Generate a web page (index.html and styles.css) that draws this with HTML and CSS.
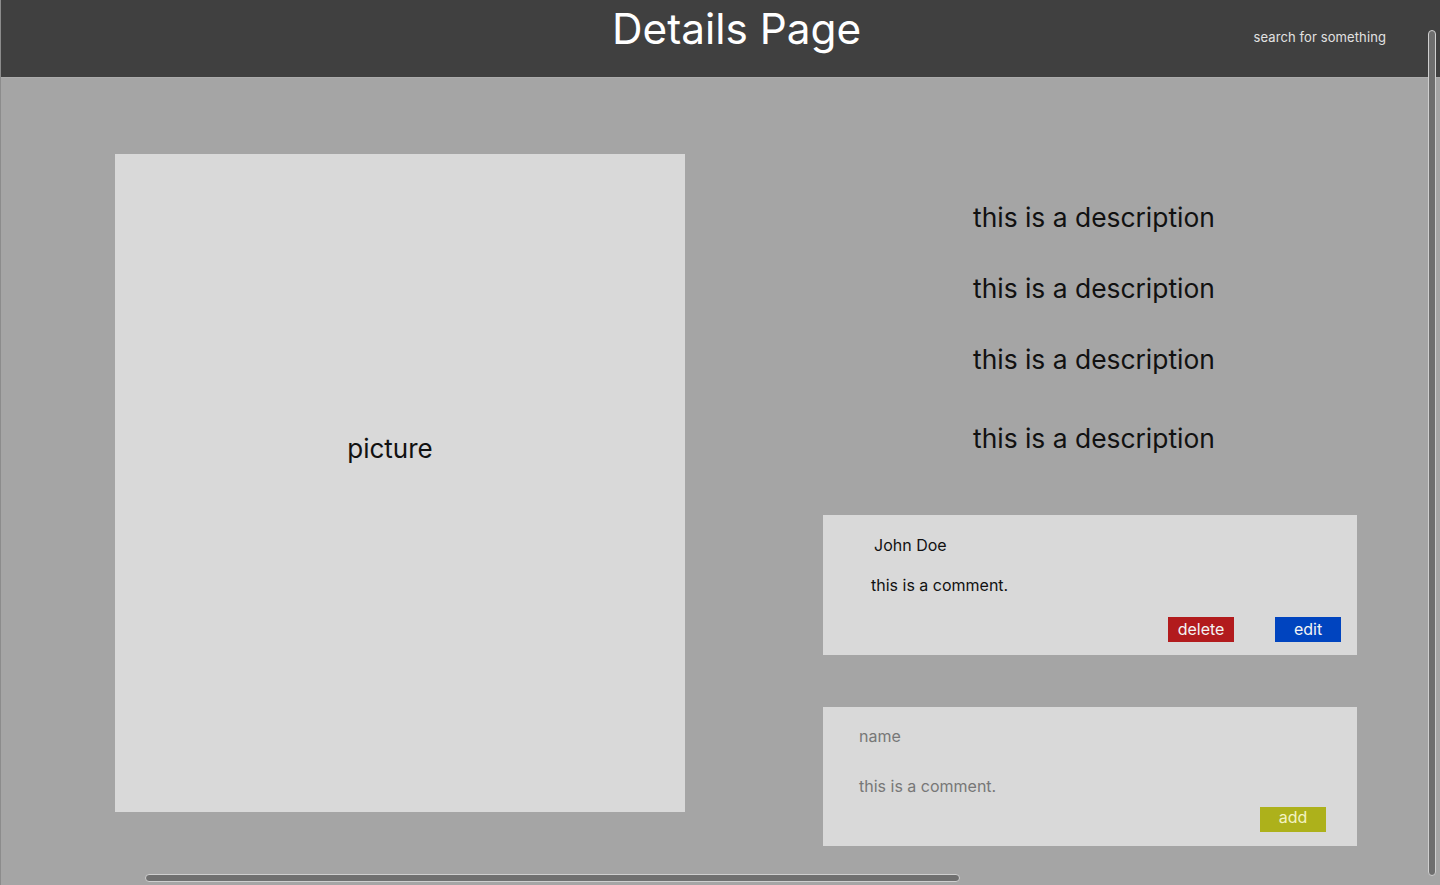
FILE: index.html
```html
<!DOCTYPE html>
<html>
<head>
<meta charset="utf-8">
<link rel="stylesheet" href="styles.css">
</head>
<body>
<header class="topbar">
  <h1 class="title">Details Page</h1>
  <div class="search">search for something</div>
</header>
<main class="content">
  <section class="picture">picture</section>
  <section class="side">
    <div class="descriptions">
      <p class="desc">this is a description</p>
      <p class="desc">this is a description</p>
      <p class="desc">this is a description</p>
      <p class="desc last">this is a description</p>
    </div>
    <div class="card comment">
      <div class="author">John Doe</div>
      <div class="comment-text">this is a comment.</div>
      <div class="actions">
        <button class="btn delete">delete</button>
        <button class="btn edit">edit</button>
      </div>
    </div>
    <div class="card form">
      <div class="field name">name</div>
      <div class="field body">this is a comment.</div>
      <div class="form-actions">
        <button class="btn add">add</button>
      </div>
    </div>
  </section>
</main>
<div class="vscroll"></div>
<div class="hscroll"></div>
</body>
</html>
```
FILE: styles.css
```css
* { box-sizing: border-box; }
html, body {
  margin: 0;
  padding: 0;
  width: 1440px;
  height: 885px;
  overflow: hidden;
}
body {
  background: #a5a5a5;
  font-family: Inter, "Noto Sans", sans-serif;
  color: #111;
  position: relative;
  border-left: 1px solid #8c8c8c;
}
.topbar {
  height: 78px;
  background: #404040;
  border-bottom: 1px solid #adadad;
  display: flex;
  align-items: flex-start;
}
.title {
  margin: 3px 0 0 611px;
  font-size: 42.3px;
  font-weight: 400;
  line-height: 51px;
  color: #ffffff;
}
.search {
  margin: 29px 54px 0 auto;
  font-size: 13px;
  line-height: 16px;
  letter-spacing: 0.1px;
  color: #e2e2e2;
}
.content {
  display: flex;
  align-items: flex-start;
  padding: 76px 0 0 114px;
}
.picture {
  width: 570px;
  height: 658px;
  background: #d9d9d9;
  display: flex;
  align-items: center;
  justify-content: center;
  font-size: 26px;
  color: #111;
  padding: 0 20px 70px 0;
}
.side {
  margin-left: 138px;
  width: 534px;
  display: flex;
  flex-direction: column;
}
.descriptions {
  padding: 47px 0 0 150px;
}
.desc {
  margin: 0 0 39px 0;
  font-size: 26.4px;
  line-height: 32px;
  color: #111;
}
.desc:nth-child(3) { margin-bottom: 47px; }
.desc.last { margin-bottom: 61px; }
.card {
  background: #d9d9d9;
  height: 140px;
  position: relative;
  display: flex;
  flex-direction: column;
}
.comment {
  padding: 20px 16px 0 48px;
}
.author {
  margin-left: 3px;
  font-size: 16px;
  line-height: 20px;
}
.comment-text {
  margin-top: 20px;
  font-size: 16px;
  line-height: 20px;
}
.actions {
  margin-top: 22px;
  display: flex;
  justify-content: flex-end;
  gap: 41px;
}
.btn {
  width: 66px;
  height: 25px;
  border: none;
  padding: 0;
  font-family: inherit;
  font-size: 16px;
  line-height: 25px;
  color: #f4f4f4;
}
.delete { background: #b21b1d; }
.edit { background: #0044bf; }
.form {
  margin-top: 52px;
  height: 139px;
  padding: 19px 31px 0 36px;
}
.field {
  font-size: 16px;
  line-height: 20px;
  color: #777777;
}
.field.body { margin-top: 30px; }
.form-actions {
  margin-top: 11px;
  display: flex;
  justify-content: flex-end;
}
.add {
  background: #adb11b;
  color: #f3f3c4;
  line-height: 20px;
  padding-bottom: 6px;
}
.vscroll {
  position: absolute;
  left: 1427px;
  top: 30px;
  width: 8px;
  height: 846px;
  border-radius: 4px;
  background: #6e6e6e;
  border: 1px solid #cfcfcf;
}
.hscroll {
  position: absolute;
  left: 144px;
  top: 874px;
  width: 815px;
  height: 8px;
  border-radius: 4px;
  background: #707070;
  border: 1px solid #cfcfcf;
}
```
